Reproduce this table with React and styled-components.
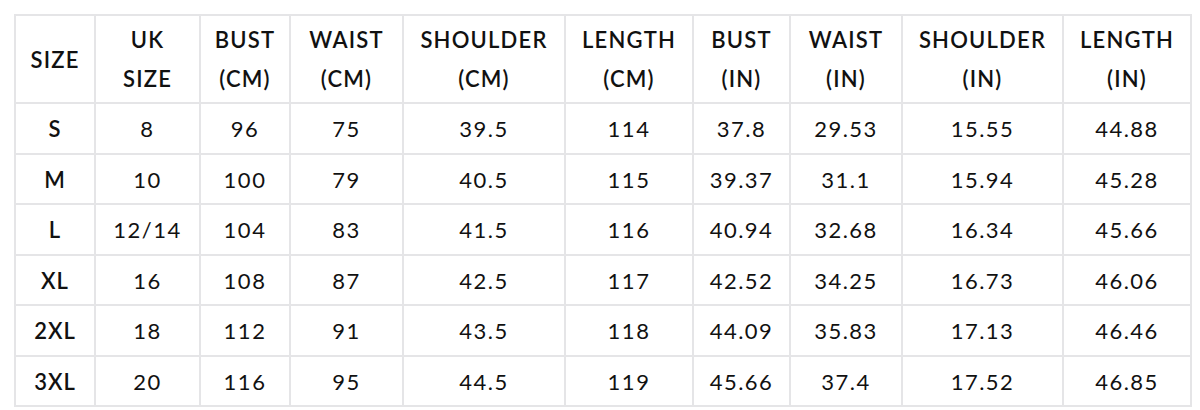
import React from 'react';
import styled, { createGlobalStyle } from 'styled-components';

const GlobalStyle = createGlobalStyle`
  html, body {
    margin: 0;
    padding: 0;
    background: #ffffff;
  }
  body {
    font-family: Lato, "Liberation Sans", sans-serif;
    color: #111111;
  }
`;

const Page = styled.div`
  padding: 14px 0 0 14px;
`;

const Grid = styled.div`
  display: inline-grid;
  grid-template-columns: 78px 103px 88px 111px 160px 126px 95px 110px 159px 126px;
  grid-template-rows: 86px 49px 48px 49px 48px 49px 48px;
  gap: 2px;
  padding: 2px;
  background: #e5e5e7;
`;

const HeadCell = styled.div`
  background: #ffffff;
  display: flex;
  align-items: center;
  justify-content: center;
  text-align: center;
  font-size: 22px;
  font-weight: 600;
  line-height: 39px;
  letter-spacing: 1.2px;
  white-space: pre-line;
`;

const Cell = styled.div`
  background: #ffffff;
  display: flex;
  align-items: center;
  justify-content: center;
  font-size: 22px;
  font-weight: ${(p) => (p.$bold ? 600 : 400)};
  letter-spacing: ${(p) => (p.$bold ? '1px' : '1.5px')};
`;

const headers = [
  'SIZE',
  'UK\nSIZE',
  'BUST\n(CM)',
  'WAIST\n(CM)',
  'SHOULDER\n(CM)',
  'LENGTH\n(CM)',
  'BUST\n(IN)',
  'WAIST\n(IN)',
  'SHOULDER\n(IN)',
  'LENGTH\n(IN)',
];

const rows = [
  ['S', '8', '96', '75', '39.5', '114', '37.8', '29.53', '15.55', '44.88'],
  ['M', '10', '100', '79', '40.5', '115', '39.37', '31.1', '15.94', '45.28'],
  ['L', '12/14', '104', '83', '41.5', '116', '40.94', '32.68', '16.34', '45.66'],
  ['XL', '16', '108', '87', '42.5', '117', '42.52', '34.25', '16.73', '46.06'],
  ['2XL', '18', '112', '91', '43.5', '118', '44.09', '35.83', '17.13', '46.46'],
  ['3XL', '20', '116', '95', '44.5', '119', '45.66', '37.4', '17.52', '46.85'],
];

const App = () => {
  return (
    <>
      <GlobalStyle />
      <Page>
        <Grid>
          {headers.map((h) => (
            <HeadCell key={h}>{h}</HeadCell>
          ))}
          {rows.map((row) =>
            row.map((value, i) => (
              <Cell key={row[0] + i} $bold={i === 0}>
                {value}
              </Cell>
            ))
          )}
        </Grid>
      </Page>
    </>
  );
};

export default App;
